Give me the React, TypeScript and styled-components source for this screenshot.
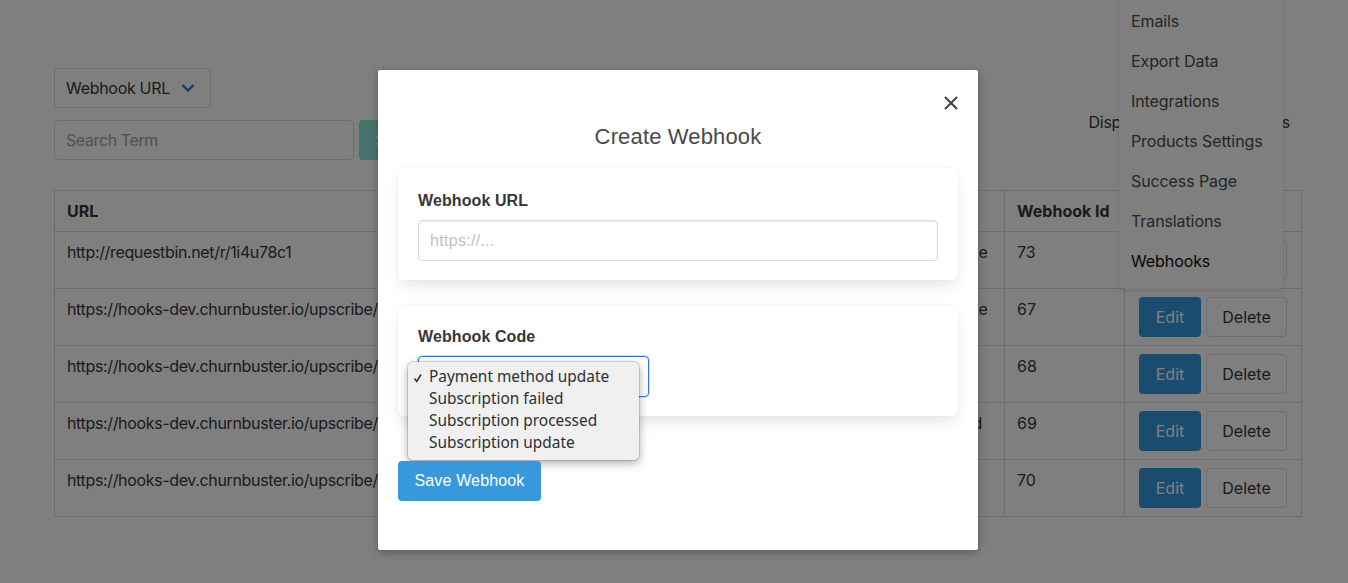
import styled, { createGlobalStyle } from 'styled-components';

const rows = [
  { url: 'http://requestbin.net/r/1i4u78c1', code: 'Payment method update', id: 73 },
  { url: 'https://hooks-dev.churnbuster.io/upscribe/', code: 'Payment method update', id: 67 },
  { url: 'https://hooks-dev.churnbuster.io/upscribe/', code: 'Subscription failed', id: 68 },
  { url: 'https://hooks-dev.churnbuster.io/upscribe/', code: 'Subscription processed', id: 69 },
  { url: 'https://hooks-dev.churnbuster.io/upscribe/', code: 'Subscription update', id: 70 },
];

const menuItems = ['Emails', 'Export Data', 'Integrations', 'Products Settings', 'Success Page', 'Translations', 'Webhooks'];
const codes = ['Payment method update', 'Subscription failed', 'Subscription processed', 'Subscription update'];

const GlobalStyle = createGlobalStyle`
  html, body {
    margin: 0;
    height: 100%;
    overflow: hidden;
    background: #fff;
  }

  * {
    box-sizing: border-box;
  }
`;

const Page = styled.div`
  position: relative;
  width: 1348px;
  height: 583px;
  padding: 68px 46px 0 54px;
  font-family: Inter, 'Liberation Sans', sans-serif;
  font-size: 16px;
  color: #363636;
  overflow: hidden;
`;

const FilterButton = styled.div`
  display: inline-flex;
  align-items: center;
  gap: 10px;
  width: 157px;
  height: 40px;
  padding: 0 11px;
  border: 1px solid #dbdbdb;
  border-radius: 4px;
  white-space: nowrap;
  letter-spacing: -0.3px;
  svg {
    flex: none;
    color: #3273dc;
  }
`;

const Toolbar = styled.div`
  display: flex;
  justify-content: space-between;
  margin-top: 12px;
  padding-right: 12px;
`;

const SearchGroup = styled.div`
  display: flex;
  gap: 5px;
`;

const SearchInput = styled.div`
  display: flex;
  align-items: center;
  width: 300px;
  height: 40px;
  padding: 0 11px;
  border: 1px solid #dbdbdb;
  border-radius: 4px;
  color: #a0a0a0;
  letter-spacing: -0.4px;
`;

const SearchButton = styled.div`
  display: flex;
  align-items: center;
  height: 40px;
  padding: 0 16px;
  border-radius: 4px;
  background: #8ce8da;
  color: #fff;
`;

const DisplayCount = styled.div`
  margin-top: -8px;
  line-height: 20px;
  letter-spacing: -0.3px;
`;

const Table = styled.table`
  width: 1247px;
  margin-top: 30px;
  border-collapse: collapse;
  table-layout: fixed;
  th,
  td {
    border: 1px solid #dbdbdb;
    padding: 9px 12px;
    text-align: left;
    vertical-align: top;
    white-space: nowrap;
    overflow: hidden;
    line-height: 23px;
  }
  th {
    padding-bottom: 8px;
    font-weight: 700;
    height: 41px;
  }
  td {
    height: 57px;
  }
`;

const UrlCell = styled.td`
  letter-spacing: -0.35px;
`;

const ActionCell = styled.td`
  && {
    padding: 8px 14px;
  }
`;

const ActionRow = styled.div`
  display: flex;
  gap: 5px;
`;

const ActionButton = styled.div<{ $primary?: boolean }>`
  display: flex;
  align-items: center;
  justify-content: center;
  width: ${(p) => (p.$primary ? '62px' : '81px')};
  height: 40px;
  border-radius: 4px;
  border: 1px solid ${(p) => (p.$primary ? 'transparent' : '#dbdbdb')};
  background: ${(p) => (p.$primary ? '#3298dc' : '#fff')};
  color: ${(p) => (p.$primary ? '#fff' : '#363636')};
`;

const SideMenu = styled.div`
  position: absolute;
  top: 0;
  left: 1119px;
  width: 164px;
  height: 289px;
  padding-top: 1px;
  background: #fff;
  border-radius: 0 0 6px 6px;
  box-shadow: 0 2px 4px rgba(10, 10, 10, 0.1);
`;

const MenuItem = styled.div<{ $active?: boolean }>`
  display: flex;
  align-items: center;
  height: 40px;
  padding-left: 12px;
  letter-spacing: -0.1px;
  color: ${(p) => (p.$active ? '#0a0a0a' : '#4a4a4a')};
`;

const Overlay = styled.div`
  position: absolute;
  inset: 0;
  background: rgba(0, 0, 0, 0.5);
`;

const Modal = styled.div`
  position: absolute;
  top: 70px;
  left: 378px;
  width: 600px;
  height: 480px;
  padding: 0 20px;
  background: #fff;
  border-radius: 2px;
  box-shadow: 0 2px 8px rgba(0, 0, 0, 0.3);
  font-family: 'Liberation Sans', Arial, sans-serif;
`;

const CloseButton = styled.div`
  position: absolute;
  top: 24px;
  right: 18px;
  display: flex;
  color: #484848;
`;

const Title = styled.h2`
  margin: 0;
  padding-top: 53px;
  height: 98px;
  text-align: center;
  font-size: 22px;
  font-weight: 400;
  line-height: 28px;
  letter-spacing: 0.15px;
  color: #4a4a4a;
`;

const Box = styled.div<{ $tight?: boolean }>`
  height: ${(p) => (p.$tight ? '111px' : '112px')};
  margin-bottom: 25px;
  padding: ${(p) => (p.$tight ? '19px' : '20px')} 20px 20px;
  border-radius: 6px;
  background: #fff;
  box-shadow: 0 8px 16px -2px rgba(10, 10, 10, 0.1), 0 0 0 1px rgba(10, 10, 10, 0.02);
`;

const Label = styled.div`
  height: 32px;
  padding-top: 1px;
  line-height: 24px;
  font-size: 16px;
  font-weight: 700;
  letter-spacing: 0.1px;
  color: #363636;
`;

const TextInput = styled.div`
  display: flex;
  align-items: center;
  height: 41px;
  padding: 1px 11px 0;
  border: 1px solid #dbdbdb;
  border-radius: 4px;
  font-size: 16px;
  letter-spacing: 0.3px;
  color: #c0c0c0;
  box-shadow: inset 0 1px 2px rgba(10, 10, 10, 0.1);
`;

const SelectWrap = styled.div`
  position: relative;
  width: 231px;
  height: 41px;
`;

const SelectBox = styled.div`
  height: 100%;
  border: 1px solid #3273dc;
  border-radius: 4px;
  box-shadow: 0 0 0 1px rgba(50, 115, 220, 0.25);
`;

const Popup = styled.div`
  position: absolute;
  top: 6px;
  left: -10px;
  width: 231px;
  padding: 4px 0 6px;
  background: #f0f0f0;
  border-radius: 5px;
  box-shadow: 0 3px 10px rgba(0, 0, 0, 0.35), 0 0 0 1px rgba(0, 0, 0, 0.12);
  font-family: 'Noto Sans', sans-serif;
  font-size: 15.4px;
`;

const PopupOption = styled.div`
  position: relative;
  height: 22px;
  padding-left: 21px;
  line-height: 22px;
  color: #2e2e2e;
  white-space: nowrap;
`;

const CheckMark = styled.svg`
  position: absolute;
  left: 5px;
  top: 7px;
`;

const SaveButton = styled.div`
  position: relative;
  display: flex;
  align-items: center;
  justify-content: center;
  width: 143px;
  height: 40px;
  margin-top: 45px;
  border-radius: 4px;
  background: #3798db;
  color: #fff;
  font-size: 16px;
  letter-spacing: 0.15px;
`;

export default function App() {
  return (
    <Page>
      <GlobalStyle />
      <FilterButton>
        Webhook URL
        <svg width="16" height="16" viewBox="0 0 16 16" fill="none">
          <path d="M2.5 5 8 10.5 13.5 5" stroke="currentColor" strokeWidth="2.4" />
        </svg>
      </FilterButton>
      <Toolbar>
        <SearchGroup>
          <SearchInput>Search Term</SearchInput>
          <SearchButton>Search</SearchButton>
        </SearchGroup>
        <DisplayCount>Displaying 5 of 5 webhooks</DisplayCount>
      </Toolbar>
      <Table>
        <colgroup>
          <col style={{ width: 736 }} />
          <col style={{ width: 214 }} />
          <col style={{ width: 120 }} />
          <col style={{ width: 177 }} />
        </colgroup>
        <thead>
          <tr>
            <th>URL</th>
            <th>Webhook Code</th>
            <th>Webhook Id</th>
            <th />
          </tr>
        </thead>
        <tbody>
          {rows.map((row) => (
            <tr key={row.id}>
              <UrlCell>{row.url}</UrlCell>
              <td>{row.code}</td>
              <td>{row.id}</td>
              <ActionCell>
                <ActionRow>
                  <ActionButton $primary>Edit</ActionButton>
                  <ActionButton>Delete</ActionButton>
                </ActionRow>
              </ActionCell>
            </tr>
          ))}
        </tbody>
      </Table>
      <SideMenu>
        {menuItems.map((item) => (
          <MenuItem key={item} $active={item === 'Webhooks'}>
            {item}
          </MenuItem>
        ))}
      </SideMenu>
      <Overlay />
      <Modal>
        <CloseButton>
          <svg width="18" height="18" viewBox="0 0 18 18" fill="none">
            <path d="M3 3 15 15M15 3 3 15" stroke="currentColor" strokeWidth="2.2" />
          </svg>
        </CloseButton>
        <Title>Create Webhook</Title>
        <Box>
          <Label>Webhook URL</Label>
          <TextInput>https://...</TextInput>
        </Box>
        <Box $tight>
          <Label>Webhook Code</Label>
          <SelectWrap>
            <SelectBox />
            <Popup>
              {codes.map((code, i) => (
                <PopupOption key={code}>
                  {i === 0 && (
                    <CheckMark width="10" height="10" viewBox="0 0 10 10" fill="none">
                      <path d="M1.5 5.5 3.8 8.5 8 1.5" stroke="#2e2e2e" strokeWidth="1.5" />
                    </CheckMark>
                  )}
                  {code}
                </PopupOption>
              ))}
            </Popup>
          </SelectWrap>
        </Box>
        <SaveButton>Save Webhook</SaveButton>
      </Modal>
    </Page>
  );
}
